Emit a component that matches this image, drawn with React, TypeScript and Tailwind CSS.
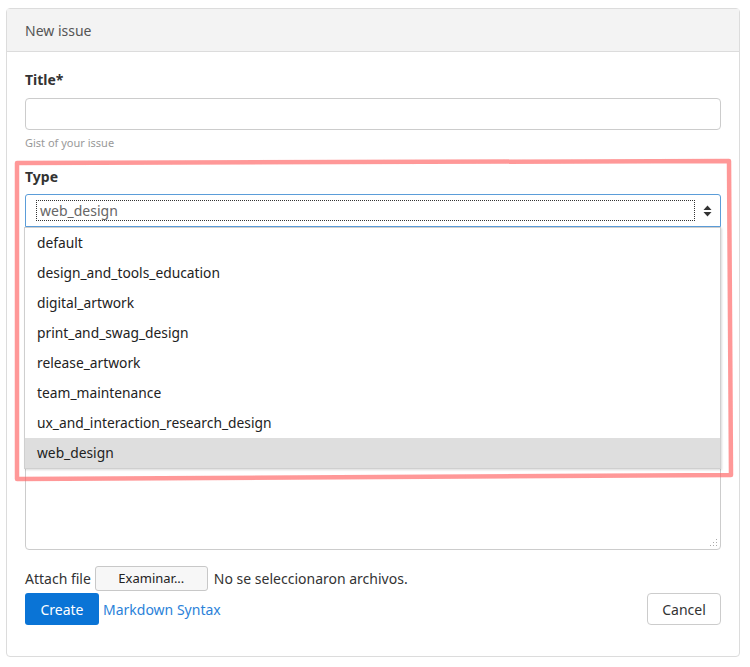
import React from 'react';

const options = [
  'default',
  'design_and_tools_education',
  'digital_artwork',
  'print_and_swag_design',
  'release_artwork',
  'team_maintenance',
  'ux_and_interaction_research_design',
  'web_design',
];

const Annotation: React.FC = () => (
  <svg className="pointer-events-none absolute left-0 top-0" width="750" height="667" viewBox="0 0 750 667">
    <defs>
      <filter id="soft" x="-5%" y="-5%" width="110%" height="110%">
        <feGaussianBlur stdDeviation="0.7" />
      </filter>
    </defs>
    <g filter="url(#soft)" stroke="#ff6262" strokeOpacity="0.65" strokeWidth="4.5" fill="none" strokeLinecap="round" strokeLinejoin="round">
      <path d="M17 163 L729 161 L731 475 L17 479 Z" />
      <path d="M252 307 L144 301" />
      <path d="M158 290 L144 301 L159 318" />
    </g>
  </svg>
);

const App: React.FC = () => {
  const selected = 'web_design';

  return (
    <div className="relative h-[667px] w-[750px] bg-white pl-[6px] pr-[10px] pt-[8px] text-[14px] text-[#333]" style={{ fontFamily: '"Noto Sans", "Open Sans", sans-serif' }}>
      <div className="rounded-[4px] border border-[#dcdcdc]">
        <div className="flex h-[43px] items-center border-b border-[#dcdcdc] bg-[#f3f3f3] px-[18px] text-[#555]">New issue</div>

        <div className="px-[18px] pb-[31px] pt-[18px]">
          <label className="block leading-[20px] font-bold">Title*</label>
          <div className="mt-[8px] h-[32px] rounded-[4px] border border-[#ccc]" />
          <p className="mt-[5px] text-[11px] leading-[16px] text-[#999]">Gist of your issue</p>

          <label className="mt-[16px] block leading-[20px] font-bold">Type</label>
          <div className="relative mt-[7px]">
            <div className="flex h-[33px] items-center rounded-t-[3px] border border-[#5b9dd9] pl-[10px] pr-[8px]">
              <div className="flex h-[21px] flex-1 items-center border border-dotted border-[#333] pl-[3px] text-[#666]">{selected}</div>
              <svg className="ml-[8px]" width="9" height="12" viewBox="0 0 9 12">
                <path d="M4.5 0.5 L8.5 5 L0.5 5 Z" fill="#333" />
                <path d="M4.5 11.5 L8.5 7 L0.5 7 Z" fill="#333" />
              </svg>
            </div>

            <ul className="absolute left-[-1px] right-0 top-[33px] z-10 border border-[#cfcfcf] bg-white text-[13.8px] shadow-[1px_1px_2px_rgba(0,0,0,0.15)]">
              {options.map(o => (
                <li key={o} className={`flex h-[30px] items-center pl-[12px] text-[#222] ${o === selected ? 'bg-[#dedede]' : ''}`}>{o}</li>
              ))}
            </ul>
          </div>

          {/* description field, mostly hidden behind the open list */}
          <div className="mt-[99px] relative h-[224px] rounded-[4px] border border-[#ccc]">
            <svg className="absolute bottom-[2px] right-[2px]" width="10" height="10" viewBox="0 0 10 10" fill="#aaa">
              <rect x="8" y="2" width="1" height="1" />
              <rect x="8" y="5" width="1" height="1" />
              <rect x="8" y="8" width="1" height="1" />
              <rect x="5" y="5" width="1" height="1" />
              <rect x="5" y="8" width="1" height="1" />
              <rect x="2" y="8" width="1" height="1" />
            </svg>
          </div>

          <div className="mt-[16px] flex h-[25px] items-center">
            <span>Attach file</span>
            <span className="ml-[4px] flex h-[25px] w-[113px] items-center justify-center rounded-[3px] border border-[#c8c8c8] bg-[#f7f7f7] text-[13px] text-[#222]">Examinar...</span>
            <span className="ml-[6px]">No se seleccionaron archivos.</span>
          </div>

          <div className="mt-[2px] flex items-center">
            <button className="h-[32px] w-[74px] rounded-[3px] bg-[#0a74d6] text-white">Create</button>
            <a className="ml-[4px] text-[#2b82d9]">Markdown Syntax</a>
            <button className="ml-auto h-[32px] w-[74px] rounded-[4px] border border-[#ccc] bg-white text-[#333]">Cancel</button>
          </div>
        </div>
      </div>
      <Annotation />
    </div>
  );
};

export default App;
